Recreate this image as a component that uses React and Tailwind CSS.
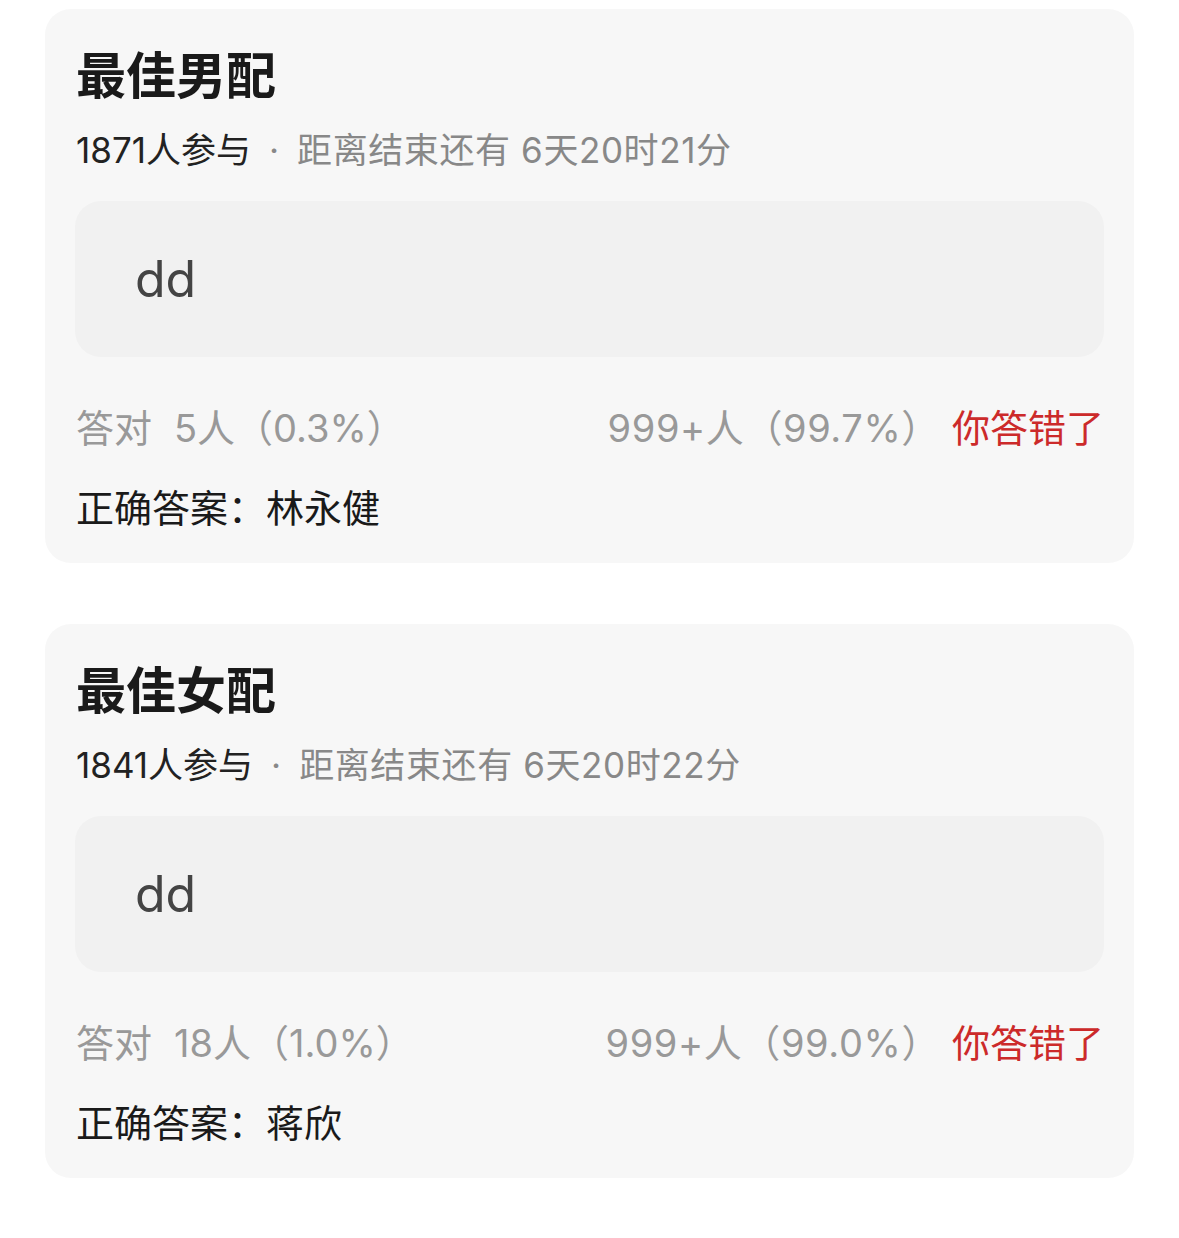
import React from 'react';

const items = [
  {
    id: 1,
    title: '最佳男配',
    joined: '1871人参与',
    remain: '距离结束还有 6天20时21分',
    answer: 'dd',
    right: '5人（0.3%）',
    wrong: '999+人（99.7%）',
    correct: '林永健',
  },
  {
    id: 2,
    title: '最佳女配',
    joined: '1841人参与',
    remain: '距离结束还有 6天20时22分',
    answer: 'dd',
    right: '18人（1.0%）',
    wrong: '999+人（99.0%）',
    correct: '蒋欣',
  },
];

const font = { fontFamily: 'Inter, "Noto Sans CJK SC", sans-serif' };

function QuizCard({ item }) {
  return (
    <div className="rounded-[26px] bg-[#f7f7f7] px-[30px] pt-[36px] pb-[31px]">
      <h2 className="pl-[1px] text-[50px] font-bold leading-[62px] text-[#1a1a1a]">{item.title}</h2>
      <p className="mt-[21px] flex pl-[1px] text-[35px] leading-[44px] text-[#888]">
        <span className="text-[#222]">{item.joined}</span>
        <span className="mx-[18px]">·</span>
        <span className="tracking-[0.6px]">{item.remain}</span>
      </p>
      <div className="mt-[29px] flex h-[156px] items-center rounded-[26px] bg-[#f1f1f1] pl-[60px]">
        <span className="text-[50px] text-[#444]">{item.answer}</span>
      </div>
      <div className="mt-[47px] flex items-center justify-between pl-[1px] text-[38px] leading-[48px]">
        <div className="flex text-[#999]">
          <span>答对</span>
          <span className="ml-[22px]">{item.right}</span>
        </div>
        <div className="flex">
          <span className="tracking-[0.6px] text-[#999]">{item.wrong}</span>
          <span className="ml-[12px] text-[#cc2a2a]">你答错了</span>
        </div>
      </div>
      <p className="mt-[32px] pl-[1px] text-[38px] leading-[48px] text-[#1a1a1a]">
        正确答案：{item.correct}
      </p>
    </div>
  );
}

export default function App() {
  return (
    <div className="min-h-[1238px] w-[1179px] bg-white pt-[9px]" style={font}>
      <div className="ml-[45px] mr-[45px] flex flex-col gap-[61px]">
        {items.map((item) => (
          <QuizCard key={item.id} item={item} />
        ))}
      </div>
    </div>
  );
}
